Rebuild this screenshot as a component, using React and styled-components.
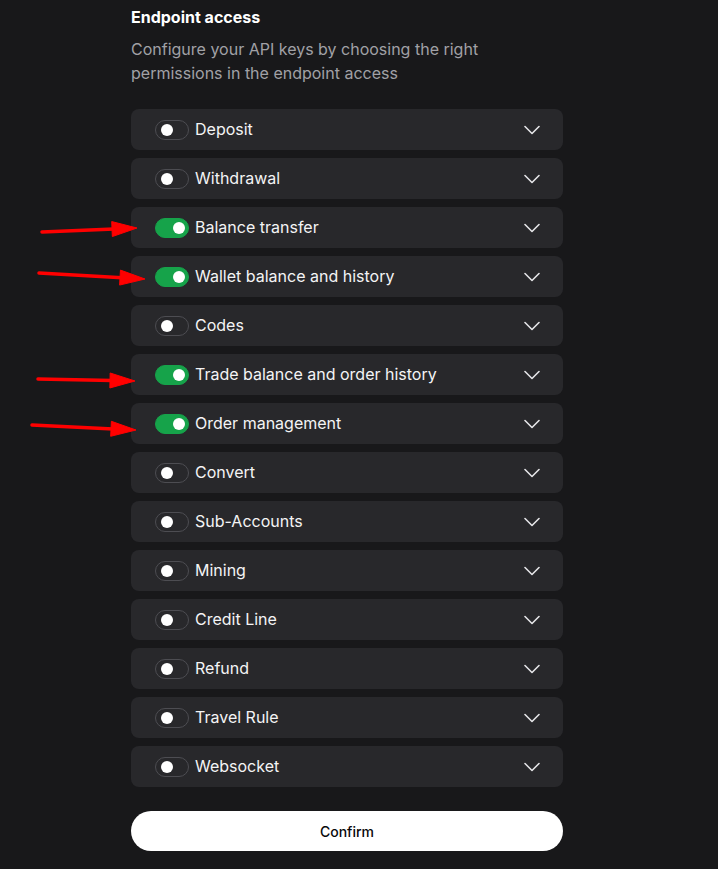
import styled, { createGlobalStyle } from "styled-components";

const GlobalStyle = createGlobalStyle`
    html, body {
        margin: 0;
        padding: 0;
        background-color: #18181a;
    }
    * {
        box-sizing: border-box;
    }
`

const endpoints = [
    { label: "Deposit", on: false },
    { label: "Withdrawal", on: false },
    { label: "Balance transfer", on: true },
    { label: "Wallet balance and history", on: true },
    { label: "Codes", on: false },
    { label: "Trade balance and order history", on: true },
    { label: "Order management", on: true },
    { label: "Convert", on: false },
    { label: "Sub-Accounts", on: false },
    { label: "Mining", on: false },
    { label: "Credit Line", on: false },
    { label: "Refund", on: false },
    { label: "Travel Rule", on: false },
    { label: "Websocket", on: false },
]

// red annotation arrows drawn over the screenshot
const arrows = [
    [42, 232, 137, 228],
    [39, 273, 145, 279],
    [38, 379, 135, 381],
    [32, 425, 136, 430],
]

function Arrow({ x1, y1, x2, y2 }) {
    const dx = x2 - x1
    const dy = y2 - y1
    const len = Math.sqrt(dx * dx + dy * dy)
    const ux = dx / len
    const uy = dy / len
    const headLen = 25
    const headW = 7.5
    const bx = x2 - ux * headLen
    const by = y2 - uy * headLen
    const p1 = `${bx - uy * headW},${by + ux * headW}`
    const p2 = `${bx + uy * headW},${by - ux * headW}`
    return (
        <g fill="#ff0000" stroke="#ff0000">
            <line x1={x1} y1={y1} x2={bx + ux * 2} y2={by + uy * 2} strokeWidth="3.5" strokeLinecap="round" />
            <polygon points={`${x2},${y2} ${p1} ${p2}`} strokeWidth="1" strokeLinejoin="round" />
        </g>
    )
}

function Chevron() {
    return (
        <svg width="16" height="10" viewBox="0 0 16 10" fill="none">
            <path d="M1 1.5 L8 8.5 L15 1.5" stroke="#e4e4e7" strokeWidth="1.6" strokeLinecap="round" strokeLinejoin="round" />
        </svg>
    )
}

export default function App() {
    return (
        <>
            <GlobalStyle />
            <Page>
                <Panel>
                    <Title>Endpoint access</Title>
                    <Description>
                        Configure your API keys by choosing the right permissions in the endpoint access
                    </Description>
                    <List>
                        {endpoints.map((item) => (
                            <Row key={item.label}>
                                <Left>
                                    <Toggle $on={item.on}>
                                        <Knob $on={item.on} />
                                    </Toggle>
                                    <Label>{item.label}</Label>
                                </Left>
                                <Chevron />
                            </Row>
                        ))}
                    </List>
                    <ConfirmButton>Confirm</ConfirmButton>
                </Panel>
                <Annotations width="718" height="869" viewBox="0 0 718 869">
                    {arrows.map(([x1, y1, x2, y2], i) => (
                        <Arrow key={i} x1={x1} y1={y1} x2={x2} y2={y2} />
                    ))}
                </Annotations>
            </Page>
        </>
    )
}

const Page = styled.div`
    position: relative;
    width: 718px;
    min-height: 869px;
    background-color: #18181a;
    font-family: 'Inter', 'Noto Sans', sans-serif;
    overflow: hidden;
`
const Panel = styled.div`
    width: 432px;
    margin-left: 131px;
    padding-top: 5px;
    display: flex;
    flex-direction: column;
`
const Title = styled.h2`
    margin: 0;
    font-size: 16px;
    line-height: 24px;
    font-weight: 700;
    color: #ffffff;
`
const Description = styled.p`
    margin: 8px 0 0 0;
    font-size: 16px;
    line-height: 24px;
    font-weight: 400;
    color: #a1a1a6;
`
const List = styled.div`
    margin-top: 24px;
    display: flex;
    flex-direction: column;
    gap: 8px;
`
const Row = styled.div`
    height: 41px;
    border-radius: 8px;
    background-color: #28282b;
    display: flex;
    align-items: center;
    justify-content: space-between;
    padding: 0 23px 0 24px;
`
const Left = styled.div`
    display: flex;
    align-items: center;
    gap: 6px;
`
const Toggle = styled.span`
    position: relative;
    display: inline-block;
    width: 34px;
    height: 20px;
    border-radius: 10px;
    background-color: ${(p) => (p.$on ? "#16a34a" : "transparent")};
    border: 1px solid ${(p) => (p.$on ? "#16a34a" : "#4d4d52")};
`
const Knob = styled.span`
    position: absolute;
    top: 3px;
    left: ${(p) => (p.$on ? "17px" : "5px")};
    width: 12px;
    height: 12px;
    border-radius: 50%;
    background-color: #ffffff;
`
const Label = styled.span`
    font-size: 16px;
    line-height: 24px;
    font-weight: 400;
    color: #f4f4f5;
    padding-bottom: 2px;
`
const ConfirmButton = styled.button`
    margin-top: 24px;
    height: 40px;
    width: 100%;
    border: none;
    border-radius: 20px;
    background-color: #ffffff;
    color: #09090b;
    font-family: 'Inter', 'Noto Sans', sans-serif;
    font-size: 14px;
    font-weight: 500;
    cursor: pointer;
`
const Annotations = styled.svg`
    position: absolute;
    top: 0;
    left: 0;
    pointer-events: none;
`
